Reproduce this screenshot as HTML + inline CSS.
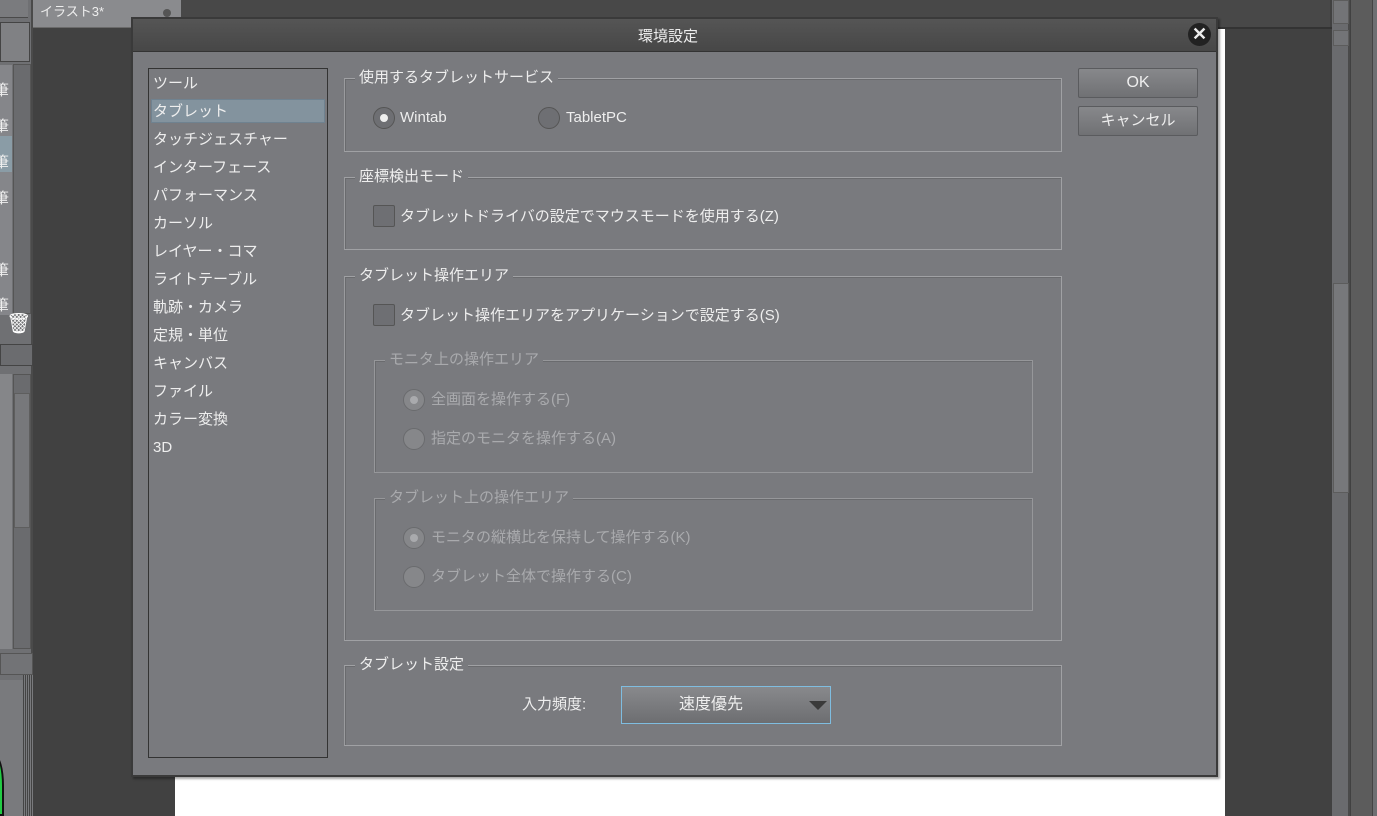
<!DOCTYPE html>
<html style="overflow:hidden;height:816px"><head><meta charset="utf-8"><style>
*{box-sizing:border-box;margin:0;padding:0}
html,body{overflow:hidden}
body{width:1377px;height:816px;background:#414141;position:relative;font-family:"Liberation Sans","Noto Sans CJK JP",sans-serif;color:#eee;font-size:15px}
.a{position:absolute}
.t{position:absolute;white-space:nowrap;line-height:22px}
.grp{position:absolute;border:1px solid #a0a1a4;border-left-color:#9a9b9e;box-shadow:inset 1px 1px 0 #6a6b6e}
.lab{position:absolute;top:-12px;background:#797a7e;padding:0 4px;line-height:22px;white-space:nowrap}
.rad{position:absolute;width:22px;height:22px;border-radius:50%;border:1px solid #555;background:#6e6f73}
.rad.on::after{content:"";position:absolute;left:6px;top:6px;width:8px;height:8px;border-radius:50%;background:#eee}
.chk{position:absolute;width:22px;height:22px;border:1px solid #555;background:#6e6f73;border-radius:2px}
.dis{color:#a9aaad}
.dis .rad{border-color:#6a6b6e;background:#86878a}
.dis .rad.on::after{background:#a9aaad}
.btn{position:absolute;border:1px solid #5a5b5e;border-radius:2px;background:linear-gradient(#87888b,#707174);text-align:center;line-height:28px;font-size:16px}
</style></head><body>
<div class="a" style="left:0;top:0;width:1330px;height:28px;background:#484848"></div>
<div class="a" style="left:33px;top:0;width:148px;height:28px;background:#8a8b8e;border-bottom:1px solid #6a6a6a"></div>
<div class="t" style="left:40px;top:3px;font-size:13px;color:#eee;line-height:18px">イラスト3*</div>
<div class="a" style="left:163px;top:9px;width:8px;height:8px;border-radius:50%;background:#555"></div>
<div class="a" style="left:175px;top:28px;width:1050px;height:788px;background:#fff"></div>
<div class="a" style="left:175px;top:27px;width:1160px;height:2px;background:#333"></div>
<div class="a" style="left:0;top:0;width:33px;height:816px;background:#6f7073;border-right:2px solid #4a4a4a"></div>
<div class="a" style="left:0;top:0;width:28px;height:18px;background:#7a7b7e;border-bottom:1px solid #4a4a4a"></div>
<div class="a" style="left:0;top:22px;width:30px;height:40px;background:#808184;border:1px solid #444"></div>
<div class="a" style="left:13px;top:64px;width:18px;height:250px;background:#6a6b6e;border:1px solid #555"></div>
<div class="a" style="left:0;top:65px;width:12px;height:250px;background:#85868a"></div>
<div class="a" style="left:0;top:136px;width:12px;height:36px;background:#8a9ca6"></div>
<div class="t" style="left:-6px;top:80px;font-size:15px">筆</div>
<div class="t" style="left:-6px;top:116px;font-size:15px">筆</div>
<div class="t" style="left:-6px;top:152px;font-size:15px">筆</div>
<div class="t" style="left:-6px;top:188px;font-size:15px">筆</div>
<div class="t" style="left:-6px;top:260px;font-size:15px">筆</div>
<div class="t" style="left:-6px;top:295px;font-size:15px">筆</div>
<div class="t" style="left:6px;top:313px;font-size:20px;color:#fff">🗑</div>
<div class="a" style="left:0;top:344px;width:33px;height:22px;background:#6b6c6f;border:1px solid #444"></div>
<div class="a" style="left:0;top:374px;width:12px;height:275px;background:#858689"></div>
<div class="a" style="left:13px;top:374px;width:18px;height:275px;background:#6a6b6e;border:1px solid #555"></div>
<div class="a" style="left:14px;top:393px;width:16px;height:135px;background:#77787b;border:1px solid #5e5e5e"></div>
<div class="a" style="left:0;top:653px;width:33px;height:22px;background:#727376;border:1px solid #555"></div>
<div class="a" style="left:0;top:680px;width:33px;height:136px;background:#797a7d"></div>
<div class="a" style="left:23px;top:675px;width:10px;height:141px;background:repeating-linear-gradient(90deg,#444 0 1px,#797a7d 1px 2px)"></div>
<div class="a" style="left:-14px;top:755px;width:18px;height:61px;border-radius:50% 50% 0 0;background:#2c4;border:2px solid #111"></div>
<div class="a" style="left:1332px;top:0;width:18px;height:816px;background:#6a6b6e;border-right:2px solid #4a4a4a"></div>
<div class="a" style="left:1333px;top:0;width:16px;height:24px;background:#737477;border:1px solid #5c5c5c"></div>
<div class="a" style="left:1333px;top:30px;width:16px;height:16px;background:#737477;border:1px solid #5c5c5c"></div>
<div class="a" style="left:1333px;top:283px;width:16px;height:210px;background:#77787b;border:1px solid #5c5c5c"></div>
<div class="a" style="left:1351px;top:0;width:21px;height:816px;background:#5c5c5c"></div>
<div class="a" style="left:1372px;top:0;width:5px;height:816px;background:#6e6f72;border-left:1px solid #444"></div>
<!-- dialog -->
<div class="a" style="left:131px;top:17px;width:1087px;height:760px;background:#797a7e;border:2px solid #3a3a3a;box-shadow:2px 2px 2px rgba(0,0,0,.35)"></div>
<div class="a" style="left:133px;top:19px;width:1083px;height:33px;background:linear-gradient(#555,#474747);border-bottom:1px solid #333"></div>
<div class="t" style="left:638px;top:26px;font-size:15px">環境設定</div>
<div class="a" style="left:1188px;top:23px;width:23px;height:23px;border-radius:50%;background:#222;color:#eee;font-size:18px;font-weight:bold;line-height:23px;text-align:center">✕</div>
<div class="a" style="left:148px;top:68px;width:180px;height:690px;background:#797a7e;border:1px solid #333"></div>
<div class="a" style="left:151px;top:99px;width:174px;height:24px;background:#83939e;border:1px solid #6f8290"></div>
<div class="t" style="left:153px;top:73px">ツール</div>
<div class="t" style="left:153px;top:101px">タブレット</div>
<div class="t" style="left:153px;top:129px">タッチジェスチャー</div>
<div class="t" style="left:153px;top:157px">インターフェース</div>
<div class="t" style="left:153px;top:185px">パフォーマンス</div>
<div class="t" style="left:153px;top:213px">カーソル</div>
<div class="t" style="left:153px;top:241px">レイヤー・コマ</div>
<div class="t" style="left:153px;top:269px">ライトテーブル</div>
<div class="t" style="left:153px;top:297px">軌跡・カメラ</div>
<div class="t" style="left:153px;top:325px">定規・単位</div>
<div class="t" style="left:153px;top:353px">キャンバス</div>
<div class="t" style="left:153px;top:381px">ファイル</div>
<div class="t" style="left:153px;top:409px">カラー変換</div>
<div class="t" style="left:153px;top:437px">3D</div>
<div class="btn" style="left:1078px;top:68px;width:120px;height:30px">OK</div>
<div class="btn" style="left:1078px;top:106px;width:120px;height:30px;font-size:15px">キャンセル</div>
<div class="grp" style="left:344px;top:78px;width:718px;height:74px"><div class="lab" style="left:10px">使用するタブレットサービス</div></div>
<div class="rad on" style="left:373px;top:107px"></div><div class="t" style="left:400px;top:107px">Wintab</div>
<div class="rad" style="left:538px;top:107px"></div><div class="t" style="left:566px;top:107px">TabletPC</div>
<div class="grp" style="left:344px;top:177px;width:718px;height:73px"><div class="lab" style="left:10px">座標検出モード</div></div>
<div class="chk" style="left:373px;top:205px"></div><div class="t" style="left:400px;top:206px">タブレットドライバの設定でマウスモードを使用する(Z)</div>
<div class="grp" style="left:344px;top:276px;width:718px;height:365px"><div class="lab" style="left:10px">タブレット操作エリア</div></div>
<div class="chk" style="left:373px;top:304px"></div><div class="t" style="left:400px;top:305px">タブレット操作エリアをアプリケーションで設定する(S)</div>
<div class="dis">
<div class="grp" style="left:374px;top:360px;width:659px;height:113px;border-color:#96979a"><div class="lab" style="left:10px;color:#a9aaad">モニタ上の操作エリア</div></div>
<div class="rad on" style="left:403px;top:389px"></div><div class="t" style="left:431px;top:389px">全画面を操作する(F)</div>
<div class="rad" style="left:403px;top:428px"></div><div class="t" style="left:431px;top:428px">指定のモニタを操作する(A)</div>
<div class="grp" style="left:374px;top:498px;width:659px;height:113px;border-color:#96979a"><div class="lab" style="left:10px;color:#a9aaad">タブレット上の操作エリア</div></div>
<div class="rad on" style="left:403px;top:527px"></div><div class="t" style="left:431px;top:527px">モニタの縦横比を保持して操作する(K)</div>
<div class="rad" style="left:403px;top:566px"></div><div class="t" style="left:431px;top:566px">タブレット全体で操作する(C)</div>
</div>
<div class="grp" style="left:344px;top:665px;width:718px;height:81px"><div class="lab" style="left:10px">タブレット設定</div></div>
<div class="t" style="left:522px;top:694px">入力頻度:</div>
<div class="a" style="left:621px;top:686px;width:210px;height:38px;border:1px solid #7fbde0;background:linear-gradient(#88898c,#6d6e71)"></div>
<div class="t" style="left:679px;top:694px;font-size:16px">速度優先</div>
<div class="a" style="left:809px;top:701px;width:0;height:0;border-left:9px solid transparent;border-right:9px solid transparent;border-top:9px solid #3a3a3a"></div>
</body></html>
